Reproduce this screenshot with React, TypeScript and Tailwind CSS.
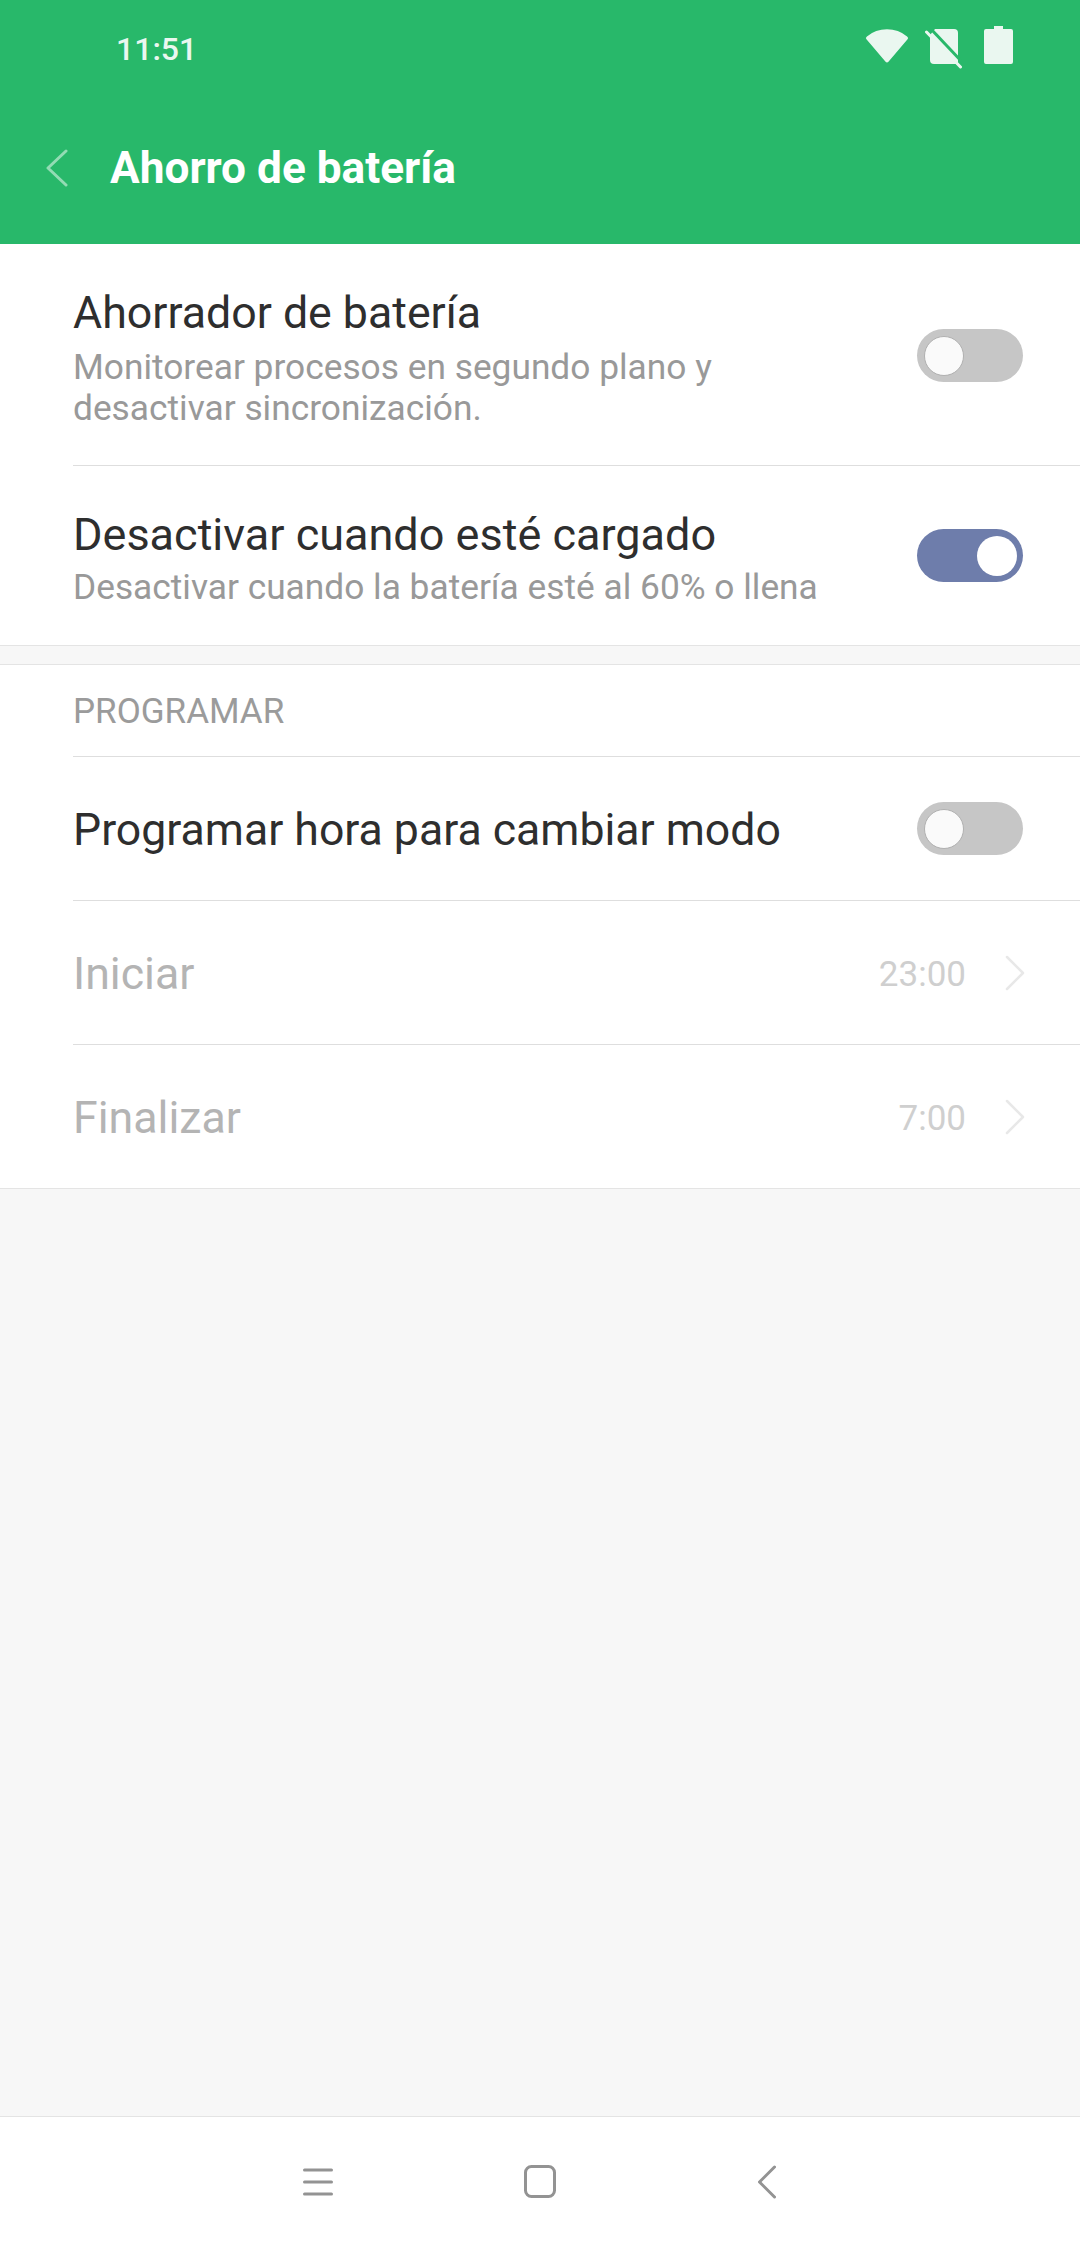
const font = { fontFamily: "Roboto, sans-serif" };

function Toggle({ on }: { on?: boolean }) {
    return (
        <div className={`flex items-center w-[106px] h-[53px] rounded-full px-[6.5px] shrink-0 ${on ? "justify-end bg-[#6e7dab]" : "justify-start bg-[#c6c6c6]"}`}>
            <div className={`w-[40px] h-[40px] rounded-full ${on ? "bg-white" : "bg-[#fafafa] border border-[#b0b0b0]"}`}></div>
        </div>
    )
}

function Chevron() {
    return (
        <svg width="20" height="36" viewBox="0 0 20 36" fill="none" stroke="#e8e8e8" strokeWidth="2.5" strokeLinecap="round" strokeLinejoin="round">
            <path d="M2 2 L18 18 L2 34" />
        </svg>
    )
}

function TimeRow({ label, value, last }: { label: string; value: string; last?: boolean }) {
    return (
        <div className={`flex items-center justify-between pr-[55px] ${last ? "h-[143px]" : "h-[144px] border-b border-[#dedede]"}`}>
            <span className="mt-[4px] text-[44.7px] text-[#b4b4b4]">{label}</span>
            <div className="flex items-center gap-[39px]">
                <span className="mt-[6px] text-[35px] text-[#cfcfcf]">{value}</span>
                <Chevron />
            </div>
        </div>
    )
}

export default function App() {
    return (
        <div style={font} className="flex flex-col w-[1080px] h-[2246px] bg-[#f7f7f7] overflow-hidden">
            {/* Status bar and title */}
            <div className="h-[244px] shrink-0 bg-[#28b86a]">
                <div className="flex items-center justify-between h-[98px] pl-[116px] pr-[67px]">
                    <span className="text-[32px] font-medium text-[#eaf7f0]">11:51</span>
                    <div className="flex items-center">
                        <svg width="44" height="36" viewBox="0 0 46 36" fill="#eaf7f0" className="mb-[6px]">
                            <path d="M1.5 11 Q0 9.5 2 8 Q11 0.5 23 0.5 Q35 0.5 44 8 Q46 9.5 44.5 11 L24.5 34.5 Q23 36 21.5 34.5 Z" />
                        </svg>
                        <svg width="38" height="42" viewBox="0 0 38 42" fill="none" className="ml-[15px]">
                            <path d="M11 1 H30 Q34 1 34 5 V36 H10 Q6 36 6 32 V7 Z" fill="#eaf7f0" />
                            <path d="M6 0 L40 36" stroke="#28b86a" strokeWidth="3" />
                            <path d="M2.5 4 L36.5 39" stroke="#eaf7f0" strokeWidth="3" strokeLinecap="round" />
                        </svg>
                        <svg width="29" height="38" viewBox="0 0 29 38" fill="#eaf7f0" className="ml-[22px] mb-[8px]">
                            <path d="M10 0 H19 V3 H27 Q29 3 29 5 V36 Q29 38 27 38 H2 Q0 38 0 36 V5 Q0 3 2 3 H10 Z" />
                        </svg>
                    </div>
                </div>
                <div className="flex items-center h-[72px] mt-[34px] pl-[46px]">
                    <svg width="22" height="38" viewBox="0 0 22 38" fill="none" stroke="#93dcb4" strokeWidth="3" strokeLinecap="round" strokeLinejoin="round">
                        <path d="M20 2 L2 19 L20 36" />
                    </svg>
                    <span className="ml-[42px] text-[44.2px] font-bold text-white">Ahorro de batería</span>
                </div>
            </div>

            {/* Battery saver */}
            <div className="bg-white pl-[73px] border-b border-[#e4e4e4]">
                <div className="flex items-center justify-between h-[222px] pr-[57px] border-b border-[#dedede]">
                    <div className="mt-[8px]">
                        <div className="text-[44.7px] leading-[50px] text-[#2e2e2e]">Ahorrador de batería</div>
                        <div className="text-[35.3px] leading-[41px] text-[#999999] mt-[9px]">
                            Monitorear procesos en segundo plano y<br />desactivar sincronización.
                        </div>
                    </div>
                    <div className="mt-[2px]"><Toggle /></div>
                </div>
                <div className="flex items-center justify-between h-[179px] pr-[57px]">
                    <div className="mt-[7px]">
                        <div className="text-[45px] leading-[50px] text-[#2e2e2e]">Desactivar cuando esté cargado</div>
                        <div className="text-[35.3px] leading-[41px] text-[#999999] mt-[7px]">Desactivar cuando la batería esté al 60% o llena</div>
                    </div>
                    <Toggle on />
                </div>
            </div>

            {/* Schedule */}
            <div className="mt-[18px] bg-white pl-[73px] border-y border-[#e4e4e4]">
                <div className="flex items-center h-[92px] pt-[4px] border-b border-[#dedede] text-[35px] text-[#9b9b9b]">PROGRAMAR</div>
                <div className="flex items-center justify-between h-[144px] pr-[57px] border-b border-[#dedede]">
                    <span className="mt-[4px] text-[44.6px] text-[#2e2e2e]">Programar hora para cambiar modo</span>
                    <Toggle />
                </div>
                <TimeRow label="Iniciar" value="23:00" />
                <TimeRow label="Finalizar" value="7:00" last />
            </div>

            {/* Nav bar */}
            <div className="mt-auto flex items-center h-[130px] pl-[303px] bg-white border-t border-[#e4e4e4]">
                <svg width="30" height="30" viewBox="0 0 30 30" fill="none" stroke="#939393" strokeWidth="3" strokeLinecap="round">
                    <path d="M1.5 3 H28.5 M1.5 15 H28.5 M1.5 27 H28.5" />
                </svg>
                <svg width="32" height="33" viewBox="0 0 32 33" fill="none" stroke="#939393" strokeWidth="3" className="ml-[191px]">
                    <rect x="1.5" y="1.5" width="29" height="30" rx="6" />
                </svg>
                <svg width="18" height="34" viewBox="0 0 18 34" fill="none" stroke="#939393" strokeWidth="3" strokeLinecap="round" strokeLinejoin="round" className="ml-[202px]">
                    <path d="M16.5 2 L1.5 17 L16.5 32" />
                </svg>
            </div>
        </div>
    )
}
